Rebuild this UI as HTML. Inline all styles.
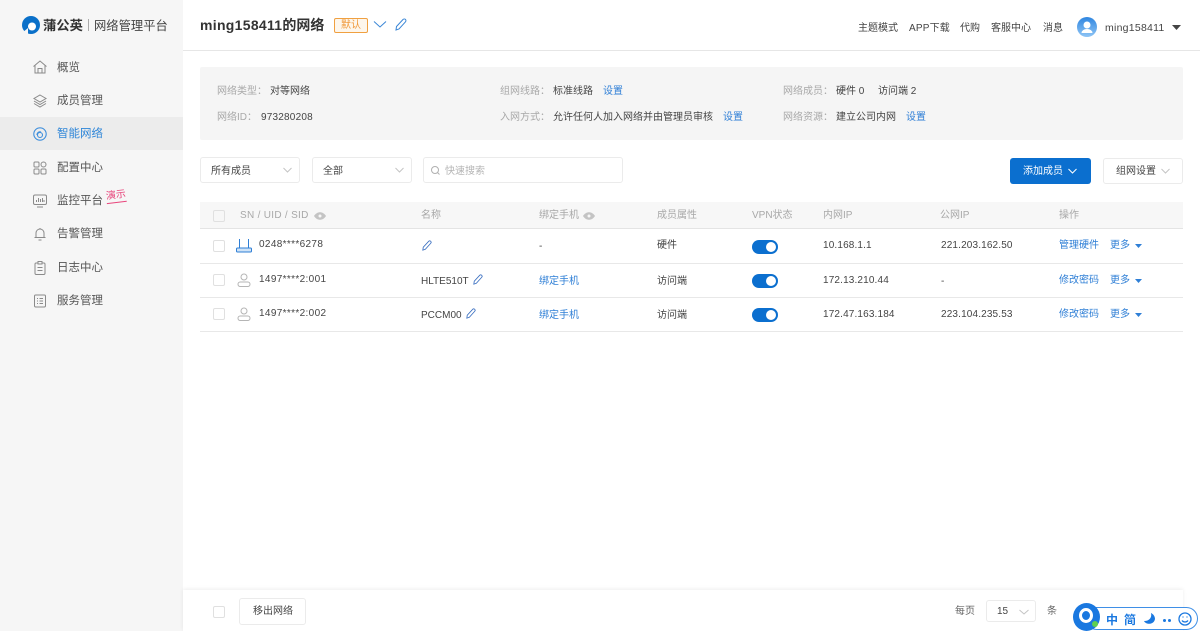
<!DOCTYPE html>
<html lang="zh"><head><meta charset="utf-8"><title>蒲公英</title>
<style>
*{box-sizing:border-box}
html,body{margin:0;padding:0;width:1200px;height:631px;overflow:hidden;background:#fff}
body{position:relative;font-family:"Liberation Sans","Noto Sans CJK SC",sans-serif;font-size:10px;color:#444}
.t{position:absolute;white-space:nowrap;line-height:14px;height:14px;margin-top:1px}
.b{position:absolute}
.g{color:#a8a8a8}.l{color:#2f7fd6}
.nav{position:absolute;left:57px;font-size:11.500px;color:#555;line-height:14px;white-space:nowrap}
svg{position:absolute;overflow:visible}
.box{position:absolute;background:#fff;border:1px solid #ebebeb;border-radius:3px}
.cb{position:absolute;left:213px;width:12px;height:12px;background:#fff;border:1px solid #e0e0e0;border-radius:2px}
.line{position:absolute;left:200px;width:983px;height:1px;background:#e8e8e8}
.sw{position:absolute;left:752px;width:26px;height:14px;border-radius:7px;background:#0b6fcf}
.sw i{position:absolute;right:2px;top:2px;width:10px;height:10px;border-radius:50%;background:#fff}
</style></head><body>
<div class="b" style="left:0;top:0;width:183px;height:631px;background:#f6f6f6"></div>
<div class="b" style="left:0;top:117px;width:183px;height:33px;background:#ececec"></div>
<div class="b" style="left:183px;top:50px;width:1017px;height:1px;background:#e6e6e6"></div>

<svg style="left:21px;top:15px" width="20" height="20" viewBox="0 0 20 20"><circle cx="10" cy="10" r="9" fill="#0a70c9"/><circle cx="11" cy="11.500" r="4" fill="#fff"/><path d="M1 18 L7 13 L7 19Z" fill="#f6f6f6"/></svg>
<span class="t" style="left:43px;top:17px;font-size:13.300px;font-weight:700;color:#333;line-height:16px;height:16px">蒲公英</span>
<div class="b" style="left:88px;top:19px;width:1px;height:12px;background:#aaa"></div>
<span class="t" style="left:94px;top:17px;font-size:12.300px;color:#444;line-height:16px;height:16px">网络管理平台</span>

<svg style="left:33px;top:60px" width="14" height="14" viewBox="0 0 14 14" fill="none" stroke="#8a8a8a" stroke-width="1"><path d="M.5 6.500 7 1l6.500 5.500M2 5.500V13h10V5.500M5 13V8.500h4V13"/></svg>
<span class="nav" style="top:61px">概览</span>
<svg style="left:33px;top:94px" width="14" height="14" viewBox="0 0 14 14" fill="none" stroke="#8a8a8a" stroke-width="1"><path d="M7 1l6 3.500L7 8 1 4.500zM1 7l6 3.500L13 7M1 9.500 7 13l6-3.500"/></svg>
<span class="nav" style="top:94px">成员管理</span>
<svg style="left:33px;top:127px" width="14" height="14" viewBox="0 0 14 14" fill="none" stroke="#3f8fdc" stroke-width="1.100"><circle cx="7" cy="7" r="6.200"/><circle cx="7" cy="8" r="2.500"/><path d="M4 8a3 3 0 0 1 4-3"/></svg>
<span class="nav" style="top:127px;color:#2f86d8">智能网络</span>
<svg style="left:33px;top:161px" width="14" height="14" viewBox="0 0 14 14" fill="none" stroke="#8a8a8a" stroke-width="1"><rect x="1" y="1" width="5" height="5" rx="1"/><circle cx="10.500" cy="3.500" r="2.500"/><rect x="1" y="8" width="5" height="5" rx="1"/><rect x="8" y="8" width="5" height="5" rx="1"/></svg>
<span class="nav" style="top:161px">配置中心</span>
<svg style="left:33px;top:194px" width="14" height="14" viewBox="0 0 14 14" fill="none" stroke="#8a8a8a" stroke-width="1"><rect x=".5" y="1" width="13" height="9.500" rx="1.500"/><path d="M4 13h6M3.500 8V6M5.500 8V4M7.500 8V5M9.500 8V4M11 8V6"/></svg>
<span class="nav" style="top:194px">监控平台</span>
<span class="t" style="left:106px;top:188px;color:#e8467c;font-size:10px;transform:rotate(-7deg);border-bottom:1px solid #e8467c;height:14px;line-height:13px">演示</span>
<svg style="left:33px;top:227px" width="14" height="14" viewBox="0 0 14 14" fill="none" stroke="#8a8a8a" stroke-width="1"><path d="M3 10.500V6a4 4 0 0 1 8 0v4.500M1.500 10.500h11M5.500 13h3M7 1v1"/></svg>
<span class="nav" style="top:227px">告警管理</span>
<svg style="left:33px;top:261px" width="14" height="14" viewBox="0 0 14 14" fill="none" stroke="#8a8a8a" stroke-width="1"><rect x="2" y="2" width="10" height="11.500" rx="1.200"/><rect x="5" y=".5" width="4" height="2.500" fill="#f6f6f6"/><path d="M4.500 6.500h5M4.500 9.500h5"/></svg>
<span class="nav" style="top:261px">日志中心</span>
<svg style="left:33px;top:294px" width="14" height="14" viewBox="0 0 14 14" fill="none" stroke="#8a8a8a" stroke-width="1"><rect x="1.500" y="1" width="11" height="12" rx="1.200"/><path d="M4 4.500h1M6.500 4.500h3.500M4 7h1M6.500 7h3.500M4 9.500h1M6.500 9.500h3.500"/></svg>
<span class="nav" style="top:294px">服务管理</span>

<span class="t" style="left:200px;top:15px;font-size:14px;font-weight:700;color:#333;letter-spacing:.3px;line-height:18px;height:18px">ming158411<span style="letter-spacing:0">的网络</span></span>
<div class="b" style="left:334px;top:18px;width:34px;height:15px;border:1px solid #f0a040;border-radius:2px;background:#fdf6ec;color:#f0983a;text-align:center;line-height:14px;font-size:10px">默认</div>
<svg style="left:373px;top:20px" width="14" height="9" viewBox="0 0 14 9" fill="none" stroke="#3a86d6" stroke-width="1"><path d="M1 1.500 7 7l6-5.500"/></svg>
<svg style="left:395px;top:18px" width="12" height="13" viewBox="0 0 12 13" fill="none" stroke="#3a86d6" stroke-width="1"><path d="M1 12l.5-3.500L8 1.500a1.300 1.300 0 0 1 2.500 2.300L4 11z"/></svg>

<span class="t" style="left:858px;top:21px">主题模式</span>
<span class="t" style="left:909px;top:21px;letter-spacing:.2px">APP下载</span>
<span class="t" style="left:960px;top:21px">代购</span>
<span class="t" style="left:991px;top:21px">客服中心</span>
<span class="t" style="left:1043px;top:21px">消息</span>
<div class="b" style="left:1077px;top:17px;width:20px;height:20px;border-radius:50%;background:linear-gradient(#2f86e0,#8fc5f5)"></div>
<svg style="left:1077px;top:17px" width="20" height="20" viewBox="0 0 20 20"><circle cx="10" cy="8" r="3.500" fill="#fff"/><path d="M4.500 16a5.500 4 0 0 1 11 0z" fill="#fff"/></svg>
<span class="t" style="left:1105px;top:20px;font-size:10.500px;letter-spacing:.25px">ming158411</span>
<svg style="left:1172px;top:25px" width="9" height="5"><path d="M0 0h9L4.500 5z" fill="#444"/></svg>

<div class="b" style="left:200px;top:67px;width:983px;height:73px;background:#f5f5f5;border-radius:2px"></div>
<span class="t g" style="left:217px;top:84px">网络类型：</span><span class="t" style="left:270px;top:84px">对等网络</span>
<span class="t g" style="left:217px;top:110px">网络ID：</span><span class="t" style="left:261px;top:110px;letter-spacing:.2px">973280208</span>
<span class="t g" style="left:500px;top:84px">组网线路：</span><span class="t" style="left:553px;top:84px">标准线路</span><span class="t l" style="left:603px;top:84px">设置</span>
<span class="t g" style="left:500px;top:110px">入网方式：</span><span class="t" style="left:553px;top:110px">允许任何人加入网络并由管理员审核</span><span class="t l" style="left:723px;top:110px">设置</span>
<span class="t g" style="left:783px;top:84px">网络成员：</span><span class="t" style="left:836px;top:84px">硬件 0</span><span class="t" style="left:878px;top:84px">访问端 2</span>
<span class="t g" style="left:783px;top:110px">网络资源：</span><span class="t" style="left:836px;top:110px">建立公司内网</span><span class="t l" style="left:906px;top:110px">设置</span>

<div class="box" style="left:200px;top:157px;width:100px;height:26px"></div>
<span class="t" style="left:211px;top:164px">所有成员</span>
<svg style="left:283px;top:167px" width="9" height="6" fill="none" stroke="#c4c4c4"><path d="M.5 1l4 4 4-4"/></svg>
<div class="box" style="left:312px;top:157px;width:100px;height:26px"></div>
<span class="t" style="left:323px;top:164px">全部</span>
<svg style="left:395px;top:167px" width="9" height="6" fill="none" stroke="#c4c4c4"><path d="M.5 1l4 4 4-4"/></svg>
<div class="box" style="left:423px;top:157px;width:200px;height:26px"></div>
<svg style="left:431px;top:166px" width="9" height="9" fill="none" stroke="#b0b0b0"><circle cx="4" cy="4" r="3.500"/><path d="M6.500 6.500 8.500 8.500"/></svg>
<span class="t" style="left:445px;top:164px;color:#b5b5b5">快速搜索</span>

<div class="b" style="left:1010px;top:158px;width:81px;height:26px;background:#0b6fcf;border-radius:3px"></div>
<span class="t" style="left:1023px;top:164px;color:#fff">添加成员</span>
<svg style="left:1068px;top:168px" width="9" height="6" fill="none" stroke="#fff"><path d="M.5 1l4 4 4-4"/></svg>
<div class="box" style="left:1103px;top:158px;width:80px;height:26px"></div>
<span class="t" style="left:1116px;top:164px">组网设置</span>
<svg style="left:1161px;top:168px" width="9" height="6" fill="none" stroke="#c4c4c4"><path d="M.5 1l4 4 4-4"/></svg>

<div class="b" style="left:200px;top:202px;width:983px;height:27px;background:#f7f7f7;border-bottom:1px solid #e4e4e4"></div>
<div class="cb" style="top:210px;background:#f7f7f7"></div>
<span class="t g" style="left:240px;top:208px;letter-spacing:.3px">SN / UID / SID</span>
<svg style="left:314px;top:212px" width="12" height="8" viewBox="0 0 12 8"><path d="M0 4c3-5 9-5 12 0-3 5-9 5-12 0z" fill="#c4c4c4"/><circle cx="6" cy="4" r="1.500" fill="#f7f7f7"/></svg>
<span class="t g" style="left:421px;top:208px">名称</span>
<span class="t g" style="left:539px;top:208px">绑定手机</span>
<svg style="left:583px;top:212px" width="12" height="8" viewBox="0 0 12 8"><path d="M0 4c3-5 9-5 12 0-3 5-9 5-12 0z" fill="#c4c4c4"/><circle cx="6" cy="4" r="1.500" fill="#f7f7f7"/></svg>
<span class="t g" style="left:657px;top:208px">成员属性</span>
<span class="t g" style="left:752px;top:208px">VPN状态</span>
<span class="t g" style="left:823px;top:208px">内网IP</span>
<span class="t g" style="left:940px;top:208px">公网IP</span>
<span class="t g" style="left:1059px;top:208px">操作</span>

<div class="cb" style="top:240px"></div>
<svg style="left:236px;top:239px" width="16" height="14" viewBox="0 0 16 14" fill="none" stroke="#2f7fd6"><path d="M3.500 0v9M12.500 0v9"/><rect x=".5" y="9" width="15" height="4" rx="1" fill="#cfe3f7"/></svg>
<span class="t" style="left:259px;top:237px;letter-spacing:.35px">0248****6278</span>
<svg style="left:422px;top:240px" width="10" height="11" viewBox="0 0 12 13" fill="none" stroke="#3a6fc0"><path d="M1 12l.5-3.500L8 1.500a1.300 1.300 0 0 1 2.500 2.300L4 11z"/></svg>
<span class="t" style="left:539px;top:239px">-</span>
<span class="t" style="left:657px;top:238px">硬件</span>
<div class="sw" style="top:240px"><i></i></div>
<span class="t" style="left:823px;top:238px;letter-spacing:.15px">10.168.1.1</span>
<span class="t" style="left:941px;top:238px;letter-spacing:.15px">221.203.162.50</span>
<span class="t l" style="left:1059px;top:238px">管理硬件</span>
<span class="t l" style="left:1110px;top:238px">更多</span>
<svg style="left:1135px;top:244px" width="7" height="4"><path d="M0 0h7L3.500 4z" fill="#2f7fd6"/></svg>
<div class="line" style="top:263px"></div>

<div class="cb" style="top:274px"></div>
<svg style="left:237px;top:273px" width="14" height="14" viewBox="0 0 14 14" fill="none" stroke="#b5b5b5"><circle cx="7" cy="4" r="3"/><rect x="1" y="9" width="12" height="4.500" rx="2.200"/></svg>
<span class="t" style="left:259px;top:272px;letter-spacing:.35px">1497****2:001</span>
<span class="t" style="left:421px;top:274px">HLTE510T</span>
<svg style="left:473px;top:274px" width="10" height="11" viewBox="0 0 12 13" fill="none" stroke="#3a6fc0"><path d="M1 12l.5-3.500L8 1.500a1.300 1.300 0 0 1 2.500 2.300L4 11z"/></svg>
<span class="t l" style="left:539px;top:274px">绑定手机</span>
<span class="t" style="left:657px;top:274px">访问端</span>
<div class="sw" style="top:274px"><i></i></div>
<span class="t" style="left:823px;top:273px;letter-spacing:.15px">172.13.210.44</span>
<span class="t" style="left:941px;top:274px">-</span>
<span class="t l" style="left:1059px;top:273px">修改密码</span>
<span class="t l" style="left:1110px;top:273px">更多</span>
<svg style="left:1135px;top:279px" width="7" height="4"><path d="M0 0h7L3.500 4z" fill="#2f7fd6"/></svg>
<div class="line" style="top:297px"></div>

<div class="cb" style="top:308px"></div>
<svg style="left:237px;top:307px" width="14" height="14" viewBox="0 0 14 14" fill="none" stroke="#b5b5b5"><circle cx="7" cy="4" r="3"/><rect x="1" y="9" width="12" height="4.500" rx="2.200"/></svg>
<span class="t" style="left:259px;top:306px;letter-spacing:.35px">1497****2:002</span>
<span class="t" style="left:421px;top:308px">PCCM00</span>
<svg style="left:466px;top:308px" width="10" height="11" viewBox="0 0 12 13" fill="none" stroke="#3a6fc0"><path d="M1 12l.5-3.500L8 1.500a1.300 1.300 0 0 1 2.500 2.300L4 11z"/></svg>
<span class="t l" style="left:539px;top:308px">绑定手机</span>
<span class="t" style="left:657px;top:308px">访问端</span>
<div class="sw" style="top:308px"><i></i></div>
<span class="t" style="left:823px;top:307px;letter-spacing:.15px">172.47.163.184</span>
<span class="t" style="left:941px;top:307px;letter-spacing:.15px">223.104.235.53</span>
<span class="t l" style="left:1059px;top:307px">修改密码</span>
<span class="t l" style="left:1110px;top:307px">更多</span>
<svg style="left:1135px;top:313px" width="7" height="4"><path d="M0 0h7L3.500 4z" fill="#2f7fd6"/></svg>
<div class="line" style="top:331px"></div>

<div class="b" style="left:183px;top:590px;width:1000px;height:41px;background:#fff;box-shadow:0 -1px 4px rgba(0,0,0,.07)"></div>
<div class="cb" style="top:606px"></div>
<div class="box" style="left:239px;top:598px;width:67px;height:27px"></div>
<span class="t" style="left:253px;top:604px">移出网络</span>
<span class="t" style="left:955px;top:604px;color:#666">每页</span>
<div class="box" style="left:986px;top:600px;width:50px;height:22px"></div>
<span class="t" style="left:997px;top:604px">15</span>
<svg style="left:1019px;top:609px" width="10" height="6" fill="none" stroke="#c4c4c4"><path d="M.5 1l4.500 4 4.500-4"/></svg>
<span class="t" style="left:1047px;top:604px;color:#666">条</span>

<div class="b" style="left:1085px;top:607px;width:113px;height:23px;background:#fff;border:1.500px solid #3f8fe6;border-radius:12px"></div>
<div class="b" style="left:1073px;top:603px;width:27px;height:28px;border-radius:50%;background:#1a78e0"></div>
<div class="b" style="left:1079px;top:608px;width:14px;height:15px;border:3.500px solid #fff;border-radius:50%"></div>
<div class="b" style="left:1092px;top:621px;width:6px;height:6px;border-radius:50%;background:#5fd04f"></div>
<span class="t" style="left:1106px;top:612px;font-size:12px;font-weight:700;color:#1a78e0">中</span>
<span class="t" style="left:1124px;top:612px;font-size:12px;font-weight:700;color:#1a78e0">简</span>
<svg style="left:1144px;top:613px" width="11" height="12" viewBox="0 0 11 12"><path d="M7 0c1 4-1 8-7 8 2 4 10 4 11-2C11 3 9 1 7 0z" fill="#1a78e0"/></svg>
<div class="b" style="left:1163px;top:619px;width:3px;height:3px;border-radius:50%;background:#1a78e0"></div>
<div class="b" style="left:1168px;top:619px;width:3px;height:3px;border-radius:50%;background:#1a78e0"></div>
<svg style="left:1178px;top:612px" width="14" height="14" viewBox="0 0 14 14" fill="none" stroke="#1a78e0" stroke-width="1.300"><circle cx="7" cy="7" r="6"/><path d="M4 8.500c1.500 2 4.500 2 6 0M4.500 5h1M8.500 5h1"/></svg>
</body></html>
